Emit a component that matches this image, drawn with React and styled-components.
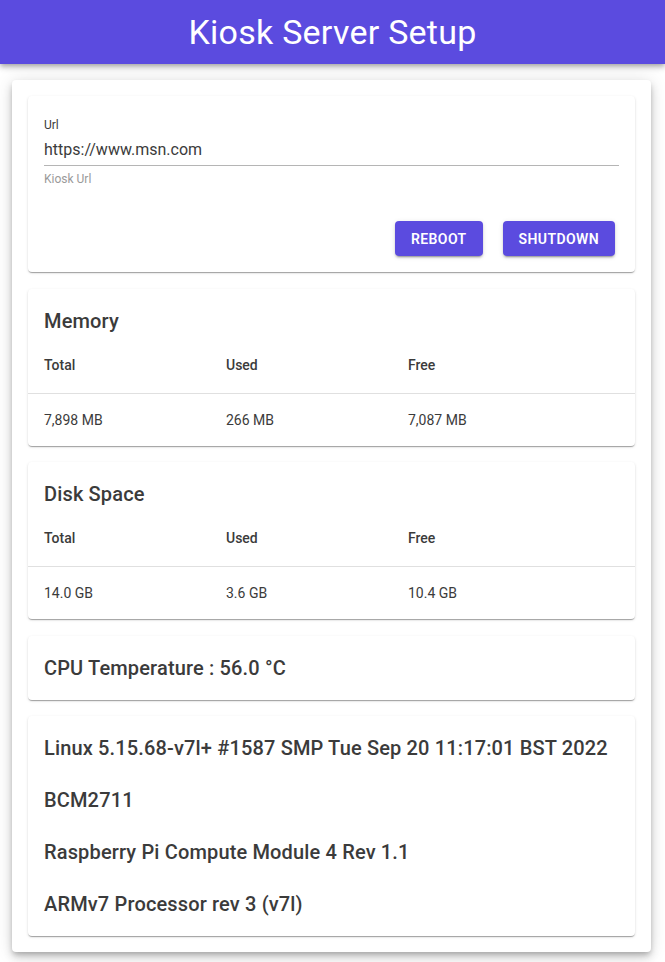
import styled, { createGlobalStyle } from "styled-components";

const PURPLE = "#5b4bdf";
const TEXT = "#3b3b3b";

const GlobalStyle = createGlobalStyle`
  body {
    margin: 0;
    background: #ffffff;
    font-family: Roboto, "Liberation Sans", sans-serif;
    color: ${TEXT};
  }
  * { box-sizing: border-box; }
`;

const Header = styled.header`
  height: 64px;
  background: ${PURPLE};
  display: flex;
  align-items: center;
  justify-content: center;
  box-shadow: 0 2px 4px -1px rgba(0, 0, 0, 0.2), 0 4px 5px 0 rgba(0, 0, 0, 0.14),
    0 1px 10px 0 rgba(0, 0, 0, 0.12);
`;

const Title = styled.h1`
  margin: 0;
  color: #fff;
  font-size: 34px;
  font-weight: 400;
  letter-spacing: 0.25px;
`;

const Outer = styled.main`
  margin: 16px 14px 12px 12px;
  padding: 16px;
  background: #fff;
  border-radius: 4px;
  box-shadow: 0 3px 5px -1px rgba(0, 0, 0, 0.2), 0 6px 10px 0 rgba(0, 0, 0, 0.14),
    0 1px 18px 0 rgba(0, 0, 0, 0.12);
  display: flex;
  flex-direction: column;
  gap: 16.5px;
`;

const Card = styled.section`
  background: #fff;
  border-radius: 4px;
  box-shadow: 0 2px 1px -1px rgba(0, 0, 0, 0.2), 0 1px 1px 0 rgba(0, 0, 0, 0.14),
    0 1px 3px 0 rgba(0, 0, 0, 0.12);
  padding: ${(p) => p.$pad || "16px"};
  display: flex;
  flex-direction: column;
  gap: ${(p) => p.$gap || "0px"};
`;

const Field = styled.div`
  display: flex;
  flex-direction: column;
  margin-top: 5px;
`;

const Label = styled.label`
  font-size: 12px;
  line-height: 16px;
  color: ${TEXT};
`;

const Input = styled.input`
  border: none;
  border-bottom: 1px solid #b5b5b5;
  outline: none;
  font-family: inherit;
  font-size: 16px;
  color: ${TEXT};
  padding: 4px 0 6px;
  margin-top: 3px;
`;

const Helper = styled.span`
  font-size: 12px;
  line-height: 16px;
  margin-top: 5px;
  color: #9a9a9a;
`;

const Actions = styled.div`
  display: flex;
  justify-content: flex-end;
  gap: 20px;
  margin-top: 34px;
  padding-right: 4px;
`;

const Button = styled.button`
  background: ${PURPLE};
  color: #fff;
  border: none;
  border-radius: 4px;
  height: 35px;
  padding: 0 16px;
  font-family: inherit;
  font-size: 14px;
  font-weight: 600;
  letter-spacing: 0.4px;
  text-transform: uppercase;
  box-shadow: 0 3px 1px -2px rgba(0, 0, 0, 0.2), 0 2px 2px 0 rgba(0, 0, 0, 0.14),
    0 1px 5px 0 rgba(0, 0, 0, 0.12);
  cursor: pointer;
`;

const CardTitle = styled.h2`
  margin: 0;
  padding: ${(p) => p.$pad || "0"};
  font-size: 20px;
  line-height: 32px;
  font-weight: 500;
  letter-spacing: 0.15px;
  color: ${TEXT};
`;

const Row = styled.div`
  display: grid;
  grid-template-columns: 182px 182px 1fr;
  border-bottom: ${(p) => (p.$last ? "none" : "1px solid #e0e0e0")};
`;

const Cell = styled.div`
  padding: 16px;
  font-size: 14px;
  line-height: ${(p) => (p.$head ? "24px" : "20px")};
  font-weight: ${(p) => (p.$head ? 500 : 400)};
  color: ${TEXT};
`;

const StatCard = ({ title, cols, values }) => (
  <Card $pad="16px 0 0">
    <CardTitle $pad="0 16px">{title}</CardTitle>
    <Row>
      {cols.map((c) => (
        <Cell key={c} $head>
          {c}
        </Cell>
      ))}
    </Row>
    <Row $last>
      {values.map((v, i) => (
        <Cell key={i}>{v}</Cell>
      ))}
    </Row>
  </Card>
);

const cols = ["Total", "Used", "Free"];

const info = [
  "Linux 5.15.68-v7l+ #1587 SMP Tue Sep 20 11:17:01 BST 2022",
  "BCM2711",
  "Raspberry Pi Compute Module 4 Rev 1.1",
  "ARMv7 Processor rev 3 (v7l)",
];

const App = () => {
  return (
    <>
      <GlobalStyle />
      <Header>
        <Title>Kiosk Server Setup</Title>
      </Header>
      <Outer>
        <Card $pad="16px 16px 16px">
          <Field>
            <Label>Url</Label>
            <Input defaultValue="https://www.msn.com" />
            <Helper>Kiosk Url</Helper>
          </Field>
          <Actions>
            <Button>Reboot</Button>
            <Button>Shutdown</Button>
          </Actions>
        </Card>
        <StatCard title="Memory" cols={cols} values={["7,898 MB", "266 MB", "7,087 MB"]} />
        <StatCard title="Disk Space" cols={cols} values={["14.0 GB", "3.6 GB", "10.4 GB"]} />
        <Card>
          <CardTitle>CPU Temperature : 56.0 °C</CardTitle>
        </Card>
        <Card $gap="20px">
          {info.map((line) => (
            <CardTitle key={line}>{line}</CardTitle>
          ))}
        </Card>
      </Outer>
    </>
  );
};

export default App;
